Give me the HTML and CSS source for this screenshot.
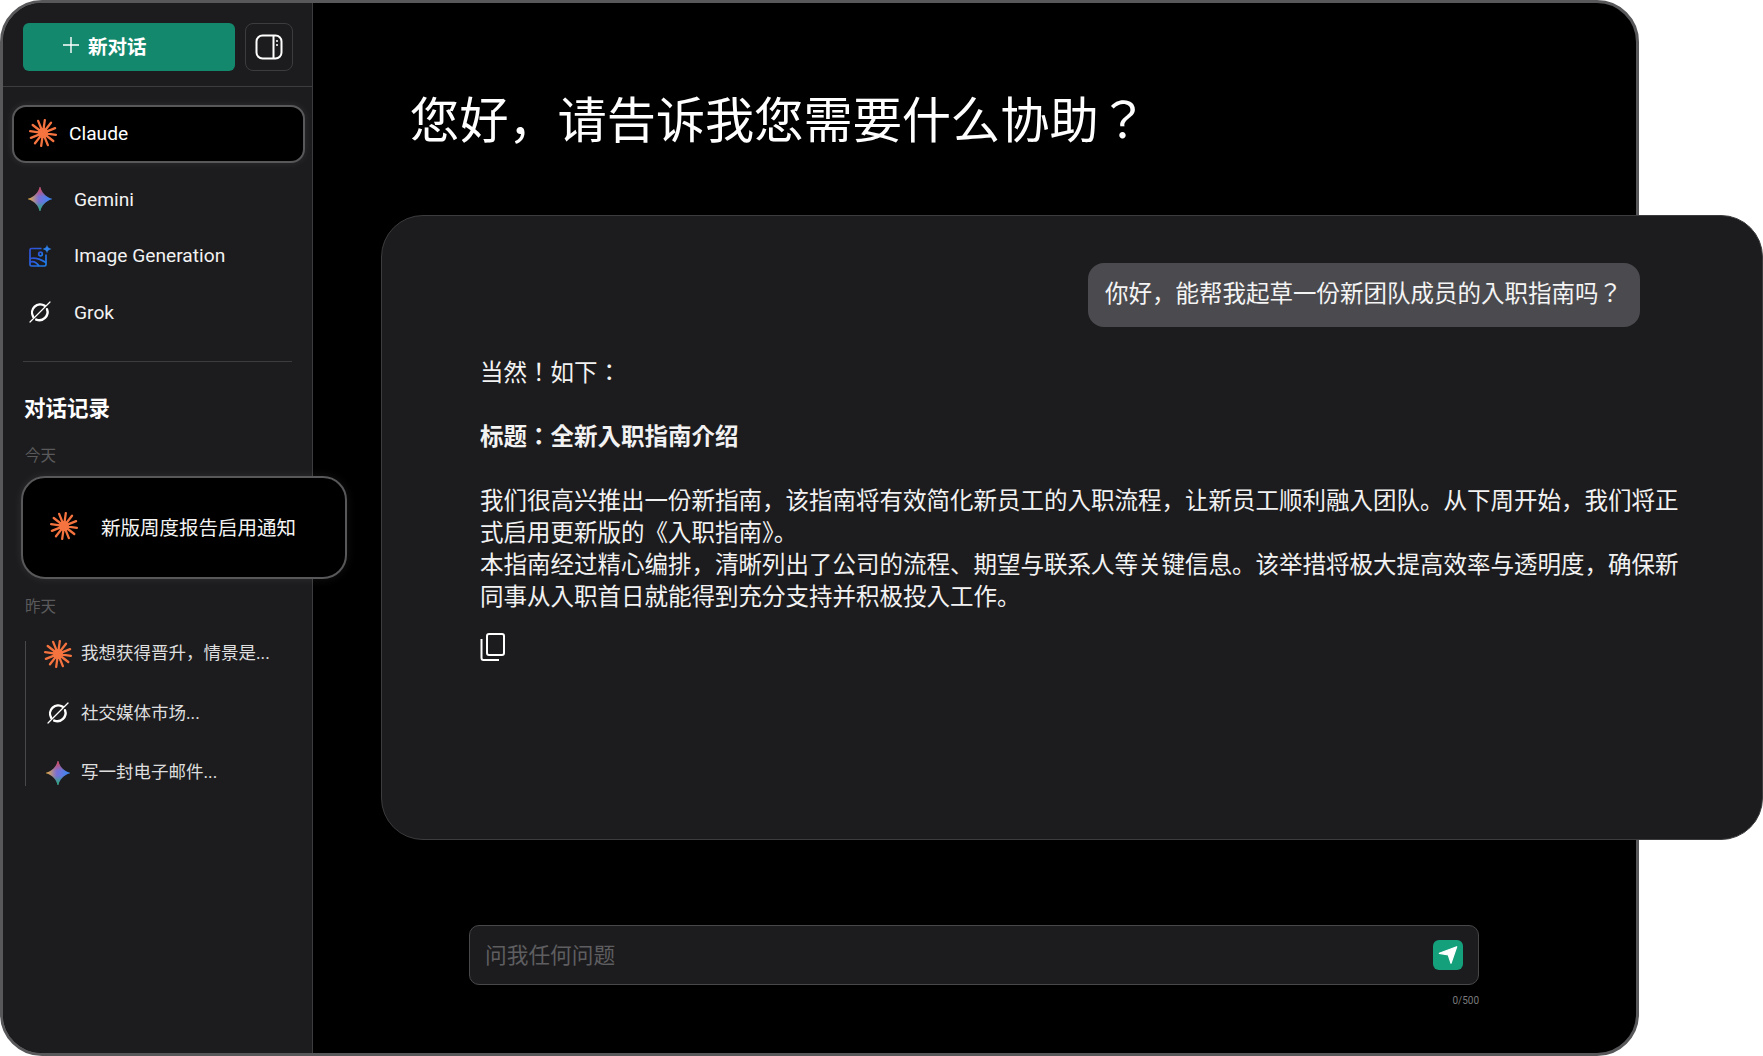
FILE: index.html
```html
<!DOCTYPE html>
<html>

<head>
    <meta charset="UTF-8">
    <title>新对话</title>
    <link rel="stylesheet" href="styles.css">
</head>

<body>
    <svg class="defs" width="0" height="0">
        <defs>
            <linearGradient id="gemH" x1="0" y1="0" x2="1" y2="0">
                <stop offset="0" stop-color="#f5b52a" />
                <stop offset="0.45" stop-color="#7a6fd6" />
                <stop offset="1" stop-color="#2f8bf5" />
            </linearGradient>
            <linearGradient id="gemV" x1="0" y1="0" x2="0" y2="1">
                <stop offset="0.05" stop-color="#e2454a" />
                <stop offset="0.42" stop-color="#e2454a" stop-opacity="0" />
                <stop offset="0.6" stop-color="#1fb36a" stop-opacity="0" />
                <stop offset="0.95" stop-color="#1fb36a" />
            </linearGradient>
            <linearGradient id="imgBlue" x1="0" y1="0" x2="1" y2="1">
                <stop offset="0" stop-color="#2f4fd8" />
                <stop offset="1" stop-color="#1f7ee8" />
            </linearGradient>
            <symbol id="i-claude" viewBox="0 0 28 28">
                <g transform="rotate(8 14 14)" fill="none" stroke="#f5733f" stroke-width="2.3" stroke-linecap="round">
                    <path d="M14 1V27M1 14H27M7.5 2.7L20.5 25.3M20.5 2.7L7.5 25.3M2.7 7.5L25.3 20.5M25.3 7.5L2.7 20.5" />
                    <circle cx="14" cy="14" r="5" fill="#f5733f" stroke="none" />
                </g>
            </symbol>
            <symbol id="i-gemini" viewBox="0 0 24 24">
                <path d="M12 0.5C13 5.5 16.5 10.5 23.5 12C16.5 13.5 13 18.5 12 23.5C11 18.5 7.5 13.5 0.5 12C7.5 10.5 11 5.5 12 0.5Z" fill="url(#gemH)" transform="translate(-1.6 -1.6) scale(1.133)" />
                <path d="M12 0.5C13 5.5 16.5 10.5 23.5 12C16.5 13.5 13 18.5 12 23.5C11 18.5 7.5 13.5 0.5 12C7.5 10.5 11 5.5 12 0.5Z" fill="url(#gemV)" transform="translate(-1.6 -1.6) scale(1.133)" />
            </symbol>
            <symbol id="i-image" viewBox="0 0 24 24">
                <g fill="none" stroke="url(#imgBlue)" stroke-width="1.7" stroke-linejoin="round">
                    <path d="M13.5 4.5H3.5A1.5 1.5 0 0 0 2 6V20.5A1.5 1.5 0 0 0 3.5 22H16.5A1.5 1.5 0 0 0 18 20.5V10.5" />
                    <path d="M2 14.5C8 13 13 15.5 18 18.5" />
                    <path d="M2 18C5 17 8 17.5 11 22" />
                    <circle cx="12.5" cy="10" r="1.8" />
                </g>
                <path d="M19 0.5C19.4 3 20.6 4.3 23.5 5C20.6 5.7 19.4 7 19 9.5C18.6 7 17.4 5.7 14.5 5C17.4 4.3 18.6 3 19 0.5Z" fill="#2f7fe8" />
            </symbol>
            <symbol id="i-grok" viewBox="0 0 24 24">
                <g fill="none" stroke="#fff" stroke-linecap="round">
                    <path d="M16.8 5.8A8.2 8.2 0 0 0 5.2 16.8" stroke-width="2.4" />
                    <path d="M19 9.2A8.2 8.2 0 0 1 8.2 19.6" stroke-width="2.4" />
                    <path d="M22 2L2 22" stroke-width="1.2" />
                </g>
            </symbol>
        </defs>
    </svg>

    <div class="frame">
        <aside class="sidebar">
            <div class="side-top">
                <button class="new-chat">
                    <svg class="plus" width="18" height="18" viewBox="0 0 18 18">
                        <path d="M9 1V17M1 9H17" stroke="#fff" stroke-width="1.4" fill="none" />
                    </svg>
                    新对话
                </button>
                <button class="panel-btn">
                    <svg width="28" height="26" viewBox="0 0 28 26" fill="none" stroke="#fff" stroke-width="2">
                        <rect x="1.5" y="1.5" width="25" height="23" rx="6" />
                        <path d="M18.5 1.5V24.5" />
                        <path d="M21 7H23M21 11H23" stroke-width="1.6" />
                    </svg>
                </button>
            </div>

            <nav class="models">
                <a class="model active">
                    <svg class="icon-claude"><use href="#i-claude" /></svg>
                    Claude
                </a>
                <a class="model">
                    <svg class="icon"><use href="#i-gemini" /></svg>
                    Gemini
                </a>
                <a class="model">
                    <svg class="icon"><use href="#i-image" /></svg>
                    Image Generation
                </a>
                <a class="model">
                    <svg class="icon"><use href="#i-grok" /></svg>
                    Grok
                </a>
            </nav>

            <div class="history">
                <h2>对话记录</h2>
                <div class="day">今天</div>
                <a class="today-card">
                    <svg class="icon-claude"><use href="#i-claude" /></svg>
                    新版周度报告启用通知
                </a>
                <div class="day yesterday">昨天</div>
                <ul class="old-list">
                    <li><svg class="icon-claude"><use href="#i-claude" /></svg><span>我想获得晋升，情景是...</span></li>
                    <li><svg class="icon"><use href="#i-grok" /></svg><span>社交媒体市场...</span></li>
                    <li><svg class="icon"><use href="#i-gemini" /></svg><span>写一封电子邮件...</span></li>
                </ul>
            </div>
        </aside>

        <main class="main">
            <h1>您好，请告诉我您需要什么协助？</h1>

            <section class="chat">
                <div class="bubble">你好，能帮我起草一份新团队成员的入职指南吗？</div>
                <div class="answer">
                    <p>当然！如下：</p>
                    <p><strong>标题：全新入职指南介绍</strong></p>
                    <p>我们很高兴推出一份新指南，该指南将有效简化新员工的入职流程，让新员工顺利融入团队。从下周开始，我们将正式启用更新版的《入职指南》。<br>本指南经过精心编排，清晰列出了公司的流程、期望与联系人等关键信息。该举措将极大提高效率与透明度，确保新同事从入职首日就能得到充分支持并积极投入工作。</p>
                </div>
                <svg class="copy" width="26" height="30" viewBox="0 0 26 30" fill="none" stroke="#fff" stroke-width="2">
                    <rect x="7" y="2" width="17" height="21" rx="2" />
                    <path d="M1.5 7V26A2 2 0 0 0 3.5 28H19" />
                </svg>
            </section>

            <div class="input-wrap">
                <div class="input-box">
                    <span class="placeholder">问我任何问题</span>
                    <button class="send">
                        <svg width="30" height="30" viewBox="0 0 30 30">
                            <path d="M23.7 6.7L6.3 13.3L15.3 15L18 23.3Z" fill="#fff" stroke="#fff" stroke-width="1.2" stroke-linejoin="round" />
                        </svg>
                    </button>
                </div>
                <div class="counter">0/500</div>
            </div>
        </main>
    </div>
</body>

</html>
```

FILE: styles.css
```css
body {
    margin: 0;
    background-color: #fff;
    overflow: hidden;
    font-family: Roboto, "Noto Sans CJK JP", sans-serif;
    color: #fff;
}

.defs {
    display: block;
    height: 0;
}

/* Marco principal */
.frame {
    box-sizing: border-box;
    display: flex;
    width: 1639px;
    height: 1056px;
    background-color: #000;
    border: 3px solid #58585a;
    border-radius: 42px;
}

/* Barra lateral */
.sidebar {
    box-sizing: border-box;
    flex: 0 0 310px;
    min-width: 0;
    background-color: #1c1c1e;
    border-right: 1px solid #3c3c3e;
    border-radius: 39px 0 0 39px;
}

.side-top {
    display: flex;
    gap: 10px;
    padding: 20px 16px 15px 20px;
    border-bottom: 1px solid #3c3c3e;
}

.new-chat {
    display: flex;
    align-items: center;
    gap: 8px;
    width: 212px;
    height: 48px;
    padding: 0 0 4px 39px;
    background-color: #14886c;
    border: 0;
    border-radius: 6px;
    color: #fff;
    font-family: inherit;
    font-size: 19.5px;
    font-weight: 700;
}

.panel-btn {
    display: flex;
    align-items: center;
    justify-content: center;
    width: 48px;
    height: 48px;
    padding: 0;
    background-color: transparent;
    border: 1px solid #3c3c3e;
    border-radius: 8px;
}

.models {
    padding: 18px 7px 0 9px;
}

.model {
    display: flex;
    align-items: center;
    gap: 22px;
    height: 56.5px;
    padding-left: 16px;
    font-size: 19.2px;
    color: #f2f2f2;
}

.model.active {
    box-sizing: border-box;
    gap: 12px;
    height: 58px;
    margin-bottom: 8px;
    padding: 0 0 2px 15px;
    background-color: #000;
    border: 2px solid #58585a;
    border-radius: 14px;
    box-shadow: 0 0 8px rgba(255, 255, 255, 0.08);
    color: #fff;
}

.icon {
    flex: none;
    width: 24px;
    height: 24px;
}

.icon-claude {
    flex: none;
    width: 28px;
    height: 28px;
}

.history {
    margin: 20px 20px 0;
    padding-top: 32px;
    border-top: 1px solid #3c3c3e;
}

.history h2 {
    margin: 0 0 0 1px;
    font-size: 21.5px;
    line-height: 30px;
    font-weight: 700;
}

.day {
    margin: 21px 0 0 2px;
    font-size: 15.5px;
    line-height: 22px;
    color: #5a5a5c;
}

.today-card {
    box-sizing: border-box;
    position: relative;
    display: flex;
    align-items: center;
    gap: 23px;
    width: 326px;
    height: 103px;
    margin: 9px 0 0 -2px;
    padding: 0 0 2px 27px;
    background-color: #000;
    border: 2px solid #58585a;
    border-radius: 24px;
    box-shadow: 0 0 10px rgba(255, 255, 255, 0.08);
    font-size: 19.5px;
    color: #f4f4f4;
}

.yesterday {
    margin-top: 17px;
}

.old-list {
    display: flex;
    flex-direction: column;
    gap: 33.5px;
    list-style: none;
    margin: 23px 0 0 2px;
    padding: 0;
    border-left: 1px solid #48484a;
}

.old-list li {
    display: flex;
    align-items: center;
    gap: 9px;
    height: 26px;
    padding-left: 18px;
    font-size: 17.5px;
    color: #dedede;
}

.old-list li span {
    margin-top: -4px;
}

.old-list li .icon {
    margin-left: 2px;
    margin-right: 2px;
}

/* Contenido */
.main {
    flex: 1;
    min-width: 0;
}

h1 {
    margin: 88px 0 64px 97px;
    font-size: 49.2px;
    line-height: 60px;
    font-weight: 400;
}

.chat {
    box-sizing: border-box;
    width: 1382px;
    height: 625px;
    margin-left: 68px;
    padding: 47px 0 0 98px;
    background-color: #1c1c1e;
    border: 1px solid #3c3c3e;
    border-radius: 42px;
}

.bubble {
    box-sizing: border-box;
    width: 552px;
    height: 64px;
    margin-left: 608px;
    padding-left: 17px;
    background-color: #4b4b4f;
    border-radius: 16px;
    font-size: 23.5px;
    line-height: 63px;
    white-space: nowrap;
    color: #f4f4f4;
}

.answer {
    width: 1202px;
    margin-top: 30px;
    font-size: 23.5px;
    line-height: 32px;
    color: #f2f2f2;
}

.answer p {
    margin: 0 0 32px;
}

.answer strong {
    font-weight: 700;
}

.copy {
    display: block;
    margin: -13px 0 0 0;
}

.input-wrap {
    width: 1010px;
    margin: 85px 0 0 156px;
}

.input-box {
    box-sizing: border-box;
    display: flex;
    align-items: center;
    justify-content: space-between;
    height: 60px;
    padding: 0 15px 0 15px;
    background-color: #1c1c1e;
    border: 1px solid #48484a;
    border-radius: 10px;
}

.placeholder {
    margin-top: -3px;
    font-size: 21.7px;
    color: #5e5e60;
}

.send {
    width: 30px;
    height: 30px;
    padding: 0;
    background-color: #15a07c;
    border: 0;
    border-radius: 6px;
}

.send svg {
    display: block;
}

.counter {
    margin-top: 9px;
    text-align: right;
    font-size: 10px;
    line-height: 14px;
    color: #7a7a7c;
}
```
